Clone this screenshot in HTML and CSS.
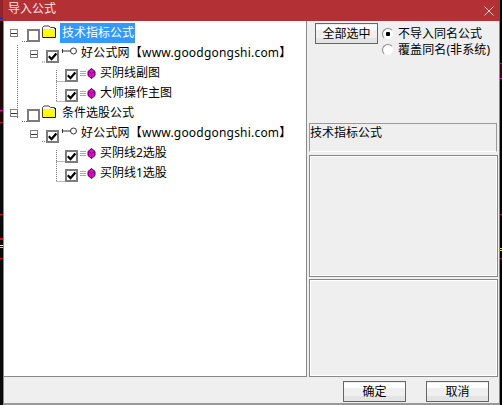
FILE: index.html
```html
<!DOCTYPE html>
<html lang="zh">
<head>
<meta charset="utf-8">
<title>导入公式</title>
<link rel="stylesheet" href="styles.css">
</head>
<body>
<svg width="0" height="0" class="defs">
  <defs>
    <pattern id="dither" width="2" height="2" patternUnits="userSpaceOnUse">
      <rect width="2" height="2" fill="#ffff00"/>
      <rect width="1" height="1" fill="#f0f060"/>
    </pattern>
    <symbol id="folder" viewBox="0 0 15 13">
      <path d="M1.500 12.500V2.500L3 1h5l1.500 1.500h4v10z" fill="#fff" stroke="#444"/>
      <rect x="2" y="4" width="12" height="8" fill="url(#dither)"/>
      <path d="M14.500 3v9.500H2" fill="none" stroke="#111"/>
    </symbol>
    <symbol id="key" viewBox="0 0 15 8">
      <path d="M.5 2v4M0 4h9" fill="none" stroke="#333"/>
      <circle cx="11.500" cy="4" r="3" fill="#fff" stroke="#333"/>
    </symbol>
    <symbol id="gem" viewBox="0 0 16 11">
      <path d="M0 3.500h6M0 5.500h6M0 7.500h6" stroke="#aaa" fill="none"/>
      <path d="M11.500.5l3.500 3v4l-3.500 3-3.500-3v-4z" fill="#ee00dd" stroke="#200820"/>
      <path d="M8.500 3.500l3 2 3-2M11.500 5.500v4" fill="none" stroke="#701070"/>
    </symbol>
    <symbol id="tick" viewBox="0 0 9 9">
      <path d="M.8 4.300l2.700 2.900 4.800-5.700" fill="none" stroke="#000" stroke-width="2.200"/>
    </symbol>
  </defs>
</svg>
<div class="screen">
  <div class="edge edge-left"></div>
  <div class="dialog">
    <header class="titlebar">
      <span class="title">导入公式</span>
      <svg class="close" width="10" height="10" viewBox="0 0 10 10"><path d="M.5.5l9 9M9.500.5l-9 9" stroke="#eccfd0" fill="none"/></svg>
    </header>
    <main class="main">
      <section class="tree">
        <svg class="connectors" width="302" height="200" viewBox="0 0 302 200">
          <path d="M9.500 16v73M14 12.500h9M29.500 21v8M34 33h8M48.500 41v32M48.500 52.500h13M48.500 72.500h13M14 92.500h9M29.500 101v8M34 112.500h8M48.500 121v32M48.500 132.500h13M48.500 152.500h13" fill="none" stroke="#777" stroke-dasharray="1 1"/>
        </svg>
        <div class="row depth0">
          <span class="exp"></span><span class="check"></span>
          <svg class="folder"><use href="#folder"/></svg>
          <span class="label selected">技术指标公式</span>
        </div>
        <div class="row depth1 low">
          <span class="exp"></span><span class="check"><svg class="tick"><use href="#tick"/></svg></span>
          <svg class="key"><use href="#key"/></svg>
          <span class="label">好公式网【www.goodgongshi.com】</span>
        </div>
        <div class="row depth2">
          <span class="check"><svg class="tick"><use href="#tick"/></svg></span>
          <svg class="gem"><use href="#gem"/></svg>
          <span class="label">买阴线副图</span>
        </div>
        <div class="row depth2">
          <span class="check"><svg class="tick"><use href="#tick"/></svg></span>
          <svg class="gem"><use href="#gem"/></svg>
          <span class="label">大师操作主图</span>
        </div>
        <div class="row depth0">
          <span class="exp"></span><span class="check"></span>
          <svg class="folder"><use href="#folder"/></svg>
          <span class="label plain">条件选股公式</span>
        </div>
        <div class="row depth1 low">
          <span class="exp"></span><span class="check"><svg class="tick"><use href="#tick"/></svg></span>
          <svg class="key"><use href="#key"/></svg>
          <span class="label">好公式网【www.goodgongshi.com】</span>
        </div>
        <div class="row depth2 low">
          <span class="check"><svg class="tick"><use href="#tick"/></svg></span>
          <svg class="gem"><use href="#gem"/></svg>
          <span class="label">买阴线2选股</span>
        </div>
        <div class="row depth2">
          <span class="check"><svg class="tick"><use href="#tick"/></svg></span>
          <svg class="gem"><use href="#gem"/></svg>
          <span class="label">买阴线1选股</span>
        </div>
      </section>
      <aside class="side">
        <div class="options">
          <button class="btn btn-all" type="button">全部选中</button>
          <div class="radios">
            <div class="radio-row"><span class="radio on"></span><span>不导入同名公式</span></div>
            <div class="radio-row"><span class="radio"></span><span class="wide">覆盖同名(非系统)</span></div>
          </div>
        </div>
        <div class="info">技术指标公式</div>
        <div class="panel panel-mid"></div>
        <div class="panel panel-low"></div>
      </aside>
    </main>
    <footer class="footer">
      <button class="btn btn-foot" type="button">确定</button>
      <button class="btn btn-foot" type="button">取消</button>
    </footer>
  </div>
  <div class="edge edge-right"></div>
</div>
</body>
</html>
```

FILE: styles.css
```css
* { box-sizing: border-box; }
html, body { margin: 0; padding: 0; background: #000; }
body { font: 12px/16px "Noto Sans", "Noto Sans CJK SC", sans-serif; color: #000; overflow: hidden; }
.defs { display: block; height: 0; }
.screen { display: flex; width: 502px; height: 405px; }

.edge { flex: none; height: 405px; }
.edge-left {
  width: 3px;
  background: linear-gradient(to bottom,
    #8f262b 0 18px, #2020e0 18px 19px, #8f262b 19px 21px, #200808 21px 110px,
    #e000c0 110px 111px, #200808 111px 122px, #d01010 122px 123px, #0a0a0a 123px 214px,
    #d01010 214px 215px, #0a0a0a 215px 238px, #d01010 238px 240px, #0a0a0a 240px 245px,
    #f4f4f4 245px 246px, #0a0a0a 246px 247px, #f0e020 247px 248px, #0a0a0a 248px 258px,
    #d01010 258px 259px, #0a0a0a 259px);
}
.edge-right {
  width: 2px;
  background: linear-gradient(to bottom,
    #000 0 63px, #d01030 63px 64px, #300810 64px 78px, #e010e0 78px 79px, #000 79px 214px,
    #d01010 214px 215px, #000 215px 248px, #f0e020 248px 249px, #000 249px 250px,
    #f0e020 250px 251px, #000 251px 258px, #d01010 258px 259px, #000 259px);
}

.dialog {
  flex: none; width: 497px; height: 405px;
  display: flex; flex-direction: column;
  background: #efefef;
  border-left: 1px solid #888;
  border-right: 1px solid #888;
  border-bottom: 2px solid #999;
}
.titlebar {
  flex: none; height: 21px; margin: 0 -1px;
  display: flex; align-items: center; justify-content: space-between;
  padding: 0 6px 3px 5px;
  background: #b33035; color: #f6e6e6;
}
.title { font-size: 12px; line-height: 16px; }
.close { display: block; margin-top: 3px; }

.main { flex: none; height: 356px; display: flex; }

.tree {
  position: relative; flex: none; width: 303px;
  padding-top: 2px;
  background: #fff;
  border-right: 1px solid #888;
  border-bottom: 1px solid #888;
}
.connectors { position: absolute; left: 4px; top: 8px; pointer-events: none; }
.row { display: flex; align-items: flex-start; height: 20px; }
.depth0 { padding-left: 6px; }
.depth1 { padding-left: 26px; }
.depth2 { padding-left: 61px; }
.exp {
  flex: none; width: 8px; height: 8px; margin-top: 6px; margin-right: 9px;
  border: 1px solid #808080;
  background: linear-gradient(#333, #333) center / 6px 1px no-repeat #fff;
}
.depth1 .exp { margin-right: 8px; }
.check {
  flex: none; width: 13px; height: 13px; margin-top: 6px;
  border: 2px solid #7c7c7c; background: #fff;
  display: flex; align-items: center; justify-content: center;
}
.low .exp, .low .check { margin-top: 7px; }
.tick { width: 9px; height: 9px; display: block; }
.folder { flex: none; width: 15px; height: 13px; margin: 2px 4px 0 1px; }
.key { flex: none; width: 15px; height: 8px; margin: 4px 4px 0 3px; }
.gem { flex: none; width: 16px; height: 11px; margin: 5px 4px 0 2px; }
.label { line-height: 20px; white-space: nowrap; }
.depth1 .label { letter-spacing: 0.2px; }
.selected { width: 75px; padding-left: 2px; background: #3399ff; color: #fff; }
.plain { padding-left: 2px; }

.side { flex: none; width: 192px; padding: 2px 0 0 2px; display: flex; flex-direction: column; }
.options { flex: none; height: 100px; display: flex; align-items: flex-start; padding-left: 6px; }
.btn {
  flex: none; padding: 0; border: 1px solid #666;
  font: 12px/16px "Noto Sans", "Noto Sans CJK SC", sans-serif; color: #000;
  background: linear-gradient(to bottom, #efefef 0 1px, #fff 1px 6px, #f0f0f0 6px 14px, #e4e4e4 14px 19px, #efefef 19px);
}
.btn-all { width: 63px; height: 21px; }
.radios { margin: 3px 0 0 4px; }
.radio-row { display: flex; align-items: center; height: 16px; white-space: nowrap; }
.wide { letter-spacing: 0.1px; }
.radio {
  flex: none; width: 12px; height: 12px; margin-right: 4px; border-radius: 50%;
  border: 1px solid; border-color: #888 #eee #eee #888;
  background: #fff;
}
.radio.on { background: radial-gradient(circle, #000 0 2px, #fff 2.500px); }

.info {
  flex: none; width: 188px; height: 29px; padding: 1px 0 0;
  border: 1px solid #999; border-bottom-color: #fff;
  line-height: 16px;
}
.panel {
  flex: none; width: 189px;
  border: 1px solid #888;
  box-shadow: inset 1px 1px 0 #fff, inset -1px -1px 0 #fff;
}
.panel-mid { height: 122px; margin-top: 3px; }
.panel-low { height: 98px; margin-top: 2px; }

.footer { flex: 1; display: flex; justify-content: flex-end; gap: 20px; padding: 4px 10px 0 0; }
.btn-foot { width: 63px; height: 21px; }
```
